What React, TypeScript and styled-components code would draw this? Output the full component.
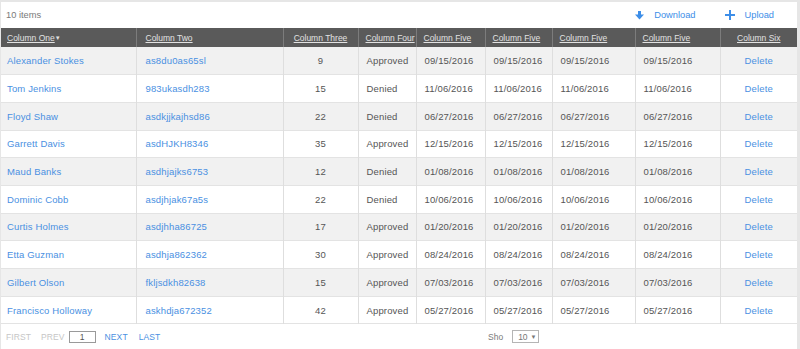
import React from "react";
import styled, { createGlobalStyle } from "styled-components";

const Global = createGlobalStyle`
  html, body { margin: 0; padding: 0; background: #e6e6e6; }
  body { font-family: "Liberation Sans", Arial, sans-serif; }
  * { box-sizing: border-box; }
`;

const Card = styled.div`
  margin: 2px 3px 0 1px;
  background: #fff;
  width: 796px;
  height: 347px;
  display: flex;
  flex-direction: column;
`;

const TopBar = styled.div`
  height: 26px;
  display: flex;
  align-items: center;
  padding: 0 0 0 5px;
  font-size: 9.3px;
  color: #7a7a7a;
`;

const Count = styled.span`
  flex: 1;
`;

const ActionBtn = styled.span<{ $mr: number }>`
  display: flex;
  align-items: center;
  gap: 10px;
  color: #3d8ee8;
  font-size: 9.3px;
  margin-right: ${(p) => p.$mr}px;
`;

const Table = styled.table`
  border-collapse: collapse;
  table-layout: fixed;
  width: 796px;
`;

const Col = styled.col<{ $w: number }>`
  width: ${(p) => p.$w}px;
`;

const HeadRow = styled.tr`
  height: 19px;
  background: #5a5a5a;
`;

const Th = styled.th<{ $align: string; $pad: number }>`
  font-weight: normal;
  font-size: 8.5px;
  color: #e2e2e2;
  text-decoration: underline;
  text-align: ${(p) => p.$align};
  padding: 0 0 0 ${(p) => p.$pad}px;
  border-left: 1px solid #7c7c7c;
  white-space: nowrap;
  overflow: hidden;
  &:first-child { border-left: none; }
`;

const Caret = styled.span`
  font-size: 6px;
  text-decoration: none;
  display: inline-block;
  vertical-align: 1px;
`;

const Row = styled.tr<{ $alt: boolean }>`
  height: 27.7px;
  background: ${(p) => (p.$alt ? "#f1f1f1" : "#fff")};
  border-bottom: 1px solid #e3e3e3;
`;

const Td = styled.td<{ $align: string; $pad: number; $link?: boolean }>`
  font-size: 9.5px;
  color: ${(p) => (p.$link ? "#4a90e2" : "#555")};
  text-align: ${(p) => p.$align};
  padding: 0 0 0 ${(p) => p.$pad}px;
  border-left: 1px solid #dedede;
  white-space: nowrap;
  overflow: hidden;
  letter-spacing: 0.15px;
  &:first-child { border-left: none; }
`;

const Footer = styled.div`
  flex: 1;
  display: grid;
  grid-template-columns: 487px 1fr;
  align-items: center;
  font-size: 8.5px;
`;

const Pager = styled.div`
  display: flex;
  align-items: center;
  padding-left: 5px;
`;

const PageLink = styled.span<{ $active: boolean; $mr: number }>`
  color: ${(p) => (p.$active ? "#4a90e2" : "#c6c6c6")};
  margin-right: ${(p) => p.$mr}px;
  letter-spacing: 0.1px;
`;

const PageInput = styled.span`
  width: 27px;
  height: 12px;
  border: 1px solid #9a9a9a;
  display: flex;
  align-items: center;
  justify-content: center;
  color: #555;
  margin-right: 9px;
  font-size: 8.5px;
`;

const Size = styled.div`
  display: flex;
  align-items: center;
  color: #7a7a7a;
  gap: 9px;
`;

const Select = styled.span`
  width: 27px;
  height: 13px;
  border: 1px solid #b5b5b5;
  display: flex;
  align-items: center;
  padding-left: 5px;
  gap: 3px;
  color: #777;
`;

const SelectCaret = styled.span`
  font-size: 6px;
`;

const cols = [135, 147, 75, 58, 69, 67, 83, 85, 77];

const headers: { label: string; align: string; pad: number; caret?: boolean }[] = [
  { label: "Column One", align: "left", pad: 6, caret: true },
  { label: "Column Two", align: "left", pad: 9 },
  { label: "Column Three", align: "center", pad: 0 },
  { label: "Column Four", align: "left", pad: 7 },
  { label: "Column Five", align: "left", pad: 7 },
  { label: "Column Five", align: "left", pad: 7 },
  { label: "Column Five", align: "left", pad: 7 },
  { label: "Column Five", align: "left", pad: 7 },
  { label: "Column Six", align: "center", pad: 0 },
];

const data: [string, string, number, string, string][] = [
  ["Alexander Stokes", "as8du0as65sl", 9, "Approved", "09/15/2016"],
  ["Tom Jenkins", "983ukasdh283", 15, "Denied", "11/06/2016"],
  ["Floyd Shaw", "asdkjjkajhsd86", 22, "Denied", "06/27/2016"],
  ["Garrett Davis", "asdHJKH8346", 35, "Approved", "12/15/2016"],
  ["Maud Banks", "asdhjajks6753", 12, "Denied", "01/08/2016"],
  ["Dominic Cobb", "asdjhjak67a5s", 22, "Denied", "10/06/2016"],
  ["Curtis Holmes", "asdjhha86725", 17, "Approved", "01/20/2016"],
  ["Etta Guzman", "asdhja862362", 30, "Approved", "08/24/2016"],
  ["Gilbert Olson", "fkljsdkh82638", 15, "Approved", "07/03/2016"],
  ["Francisco Holloway", "askhdja672352", 42, "Approved", "05/27/2016"],
];

const DownIcon = () => (
  <svg width="9" height="9" viewBox="0 0 9 9">
    <rect x="3" y="0" width="3" height="4" fill="#3d8ee8" />
    <polygon points="0,3.5 9,3.5 4.5,8.5" fill="#3d8ee8" />
  </svg>
);

const PlusIcon = () => (
  <svg width="10" height="10" viewBox="0 0 10 10">
    <rect x="4" y="0" width="2" height="10" fill="#3d8ee8" />
    <rect x="0" y="4" width="10" height="2" fill="#3d8ee8" />
  </svg>
);

export default function App() {
  return (
    <>
      <Global />
      <Card>
        <TopBar>
          <Count>10 items</Count>
          <ActionBtn $mr={29}>
            <DownIcon />
            Download
          </ActionBtn>
          <ActionBtn $mr={23}>
            <PlusIcon />
            Upload
          </ActionBtn>
        </TopBar>
        <Table>
          <colgroup>
            {cols.map((w, i) => (
              <Col key={i} $w={w} />
            ))}
          </colgroup>
          <thead>
            <HeadRow>
              {headers.map((h, i) => (
                <Th key={i} $align={h.align} $pad={h.pad}>
                  {h.label}
                  {h.caret && <Caret>▼</Caret>}
                </Th>
              ))}
            </HeadRow>
          </thead>
          <tbody>
            {data.map((r, i) => (
              <Row key={i} $alt={i % 2 === 0}>
                <Td $align="left" $pad={6} $link>{r[0]}</Td>
                <Td $align="left" $pad={9} $link>{r[1]}</Td>
                <Td $align="center" $pad={0}>{r[2]}</Td>
                <Td $align="left" $pad={8}>{r[3]}</Td>
                <Td $align="left" $pad={8}>{r[4]}</Td>
                <Td $align="left" $pad={8}>{r[4]}</Td>
                <Td $align="left" $pad={8}>{r[4]}</Td>
                <Td $align="left" $pad={8}>{r[4]}</Td>
                <Td $align="center" $pad={0} $link>Delete</Td>
              </Row>
            ))}
          </tbody>
        </Table>
        <Footer>
          <Pager>
            <PageLink $active={false} $mr={10}>FIRST</PageLink>
            <PageLink $active={false} $mr={4}>PREV</PageLink>
            <PageInput>1</PageInput>
            <PageLink $active $mr={11}>NEXT</PageLink>
            <PageLink $active $mr={0}>LAST</PageLink>
          </Pager>
          <Size>
            <span>Sho</span>
            <Select>
              10 <SelectCaret>▼</SelectCaret>
            </Select>
          </Size>
        </Footer>
      </Card>
    </>
  );
}
